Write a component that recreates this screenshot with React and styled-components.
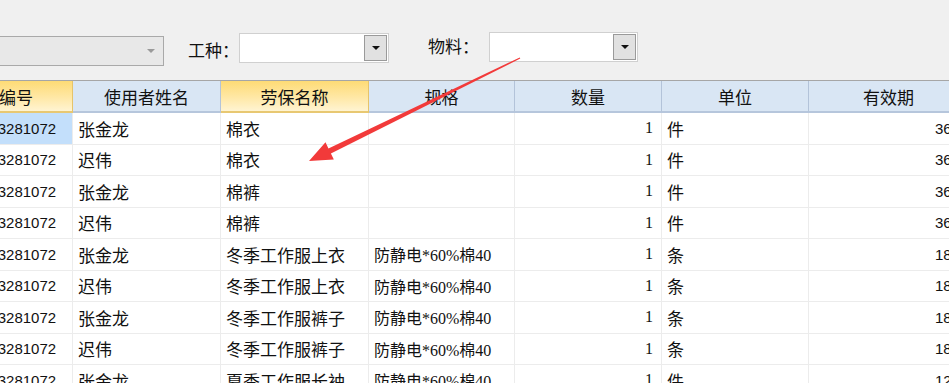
import styled, { createGlobalStyle } from 'styled-components';

const Global = createGlobalStyle`
  html, body {
    margin: 0;
    padding: 0;
    background: #ffffff;
    overflow: hidden;
  }
`;

const Page = styled.div`
  position: relative;
  width: 949px;
  height: 383px;
  overflow: hidden;
  background: #ffffff;
  font-family: "Liberation Sans", "Noto Sans CJK SC", sans-serif;
  color: #111;
`;

// barra de filtros
const Toolbar = styled.div`
  height: 81px;
  box-sizing: border-box;
  background: #f0f0f0;
  border-bottom: 1px solid #a6a6a6;
  display: flex;
  align-items: center;
  padding-top: 17px;
`;

const Combo = styled.div`
  display: flex;
  width: ${(p) => p.$width}px;
  height: 30px;
  margin-left: ${(p) => p.$ml || 0}px;
  margin-top: ${(p) => p.$mt || 0}px;
  box-sizing: border-box;
  border: 1px solid ${(p) => (p.$disabled ? '#a9a9a9' : '#d0d0d0')};
  background: ${(p) => (p.$disabled ? '#e8e8e8' : '#ffffff')};
  padding: 1px;
`;

const ComboField = styled.div`
  flex: 1;
`;

const ComboButton = styled.div`
  width: 23px;
  box-sizing: border-box;
  display: flex;
  align-items: center;
  justify-content: center;
  background: ${(p) => (p.$disabled ? 'transparent' : '#e1e1e1')};
  border: 1px solid ${(p) => (p.$disabled ? 'transparent' : '#9a9a9a')};

  &::after {
    content: '';
    border-left: 4px solid transparent;
    border-right: 4px solid transparent;
    border-top: 4px solid ${(p) => (p.$disabled ? '#9a9a9a' : '#111')};
  }
`;

const Label = styled.span`
  font-size: 17px;
  margin-left: ${(p) => p.$ml}px;
  margin-right: ${(p) => p.$mr}px;
  margin-top: ${(p) => p.$mt || 0}px;
  white-space: nowrap;
`;

const Grid = styled.div`
  display: grid;
  grid-template-columns: 147px 148px 148px 146px 147px 147px 160px;
  margin-left: -74px;
  width: max-content;
`;

const HeadCell = styled.div`
  height: 32px;
  box-sizing: border-box;
  display: flex;
  align-items: center;
  justify-content: center;
  font-size: 17px;
  white-space: nowrap;
  overflow: hidden;
  border-right: 1px solid ${(p) => (p.$active ? '#e6c46a' : '#b3c3d9')};
  border-bottom: 2px solid ${(p) => (p.$active ? '#e8c872' : '#b6c6dc')};
  background: ${(p) =>
    p.$active
      ? 'linear-gradient(#fedb75, #ffe8a6 55%, #fff4d2)'
      : '#d9e6f4'};
`;

const Cell = styled.div`
  height: 31.5px;
  box-sizing: border-box;
  display: flex;
  align-items: center;
  justify-content: ${(p) => (p.$right ? 'flex-end' : 'flex-start')};
  padding: ${(p) => (p.$right ? '0 8px 0 0' : '0 0 0 5px')};
  font-size: ${(p) => (p.$serif ? 16 : p.$num ? 15 : 17)}px;
  font-family: ${(p) =>
    p.$serif
      ? '"Liberation Serif", "Noto Sans CJK SC", serif'
      : '"Liberation Sans", "Noto Sans CJK SC", sans-serif'};
  white-space: nowrap;
  overflow: hidden;
  border-right: 1px solid #ececec;
  border-bottom: 1px solid #ececec;
  background: ${(p) => (p.$selected ? '#c3dffb' : '#ffffff')};
`;

const Arrow = styled.svg`
  position: absolute;
  left: 0;
  top: 0;
  pointer-events: none;
`;

const columns = ['人员编号', '使用者姓名', '劳保名称', '规格', '数量', '单位', '有效期'];
const activeCols = [0, 2];

const rows = [
  ['张金龙', '棉衣', '', '件', '360'],
  ['迟伟', '棉衣', '', '件', '360'],
  ['张金龙', '棉裤', '', '件', '360'],
  ['迟伟', '棉裤', '', '件', '360'],
  ['张金龙', '冬季工作服上衣', '防静电*60%棉40', '条', '180'],
  ['迟伟', '冬季工作服上衣', '防静电*60%棉40', '条', '180'],
  ['张金龙', '冬季工作服裤子', '防静电*60%棉40', '条', '180'],
  ['迟伟', '冬季工作服裤子', '防静电*60%棉40', '条', '180'],
  ['张金龙', '夏季工作服长袖', '防静电*60%棉40', '件', '120'],
];

// flecha roja
const tail = [520, 58];
const tip = [309, 161];
const dx = tip[0] - tail[0];
const dy = tip[1] - tail[1];
const len = Math.hypot(dx, dy);
const u = [dx / len, dy / len];
const n = [-u[1], u[0]];
const base = [tip[0] - 23 * u[0], tip[1] - 23 * u[1]];
const pt = (p, k) => `${p[0] + k * n[0]},${p[1] + k * n[1]}`;
const arrowPoints = [
  pt(tail, 0.6),
  pt(base, 2.8),
  pt(base, 9.5),
  `${tip[0]},${tip[1]}`,
  pt(base, -9.5),
  pt(base, -2.8),
  pt(tail, -0.6),
].join(' ');

export default function App() {
  return (
    <Page>
      <Global />
      <Toolbar>
        <Combo $width={200} $ml={-36} $mt={4} $disabled>
          <ComboField />
          <ComboButton $disabled />
        </Combo>
        <Label $ml={24} $mr={0} $mt={2}>工种：</Label>
        <Combo $width={150} $mt={-2}>
          <ComboField />
          <ComboButton />
        </Combo>
        <Label $ml={39} $mr={10} $mt={-6}>物料：</Label>
        <Combo $width={149} $mt={-4}>
          <ComboField />
          <ComboButton />
        </Combo>
      </Toolbar>
      <Grid>
        {columns.map((c, i) => (
          <HeadCell key={c} $active={activeCols.includes(i)}>
            {c}
          </HeadCell>
        ))}
        {rows.map((r, i) => [
          <Cell key={`a${i}`} $num $selected={i === 0}>
            201808003281072
          </Cell>,
          <Cell key={`b${i}`}>{r[0]}</Cell>,
          <Cell key={`c${i}`}>{r[1]}</Cell>,
          <Cell key={`d${i}`} $serif>
            {r[2]}
          </Cell>,
          <Cell key={`e${i}`} $right $serif>
            1
          </Cell>,
          <Cell key={`f${i}`}>{r[3]}</Cell>,
          <Cell key={`g${i}`} $right $num>
            {r[4]}
          </Cell>,
        ])}
      </Grid>
      <Arrow width="949" height="383">
        <polygon points={arrowPoints} fill="#f23a3a" />
      </Arrow>
    </Page>
  );
}
